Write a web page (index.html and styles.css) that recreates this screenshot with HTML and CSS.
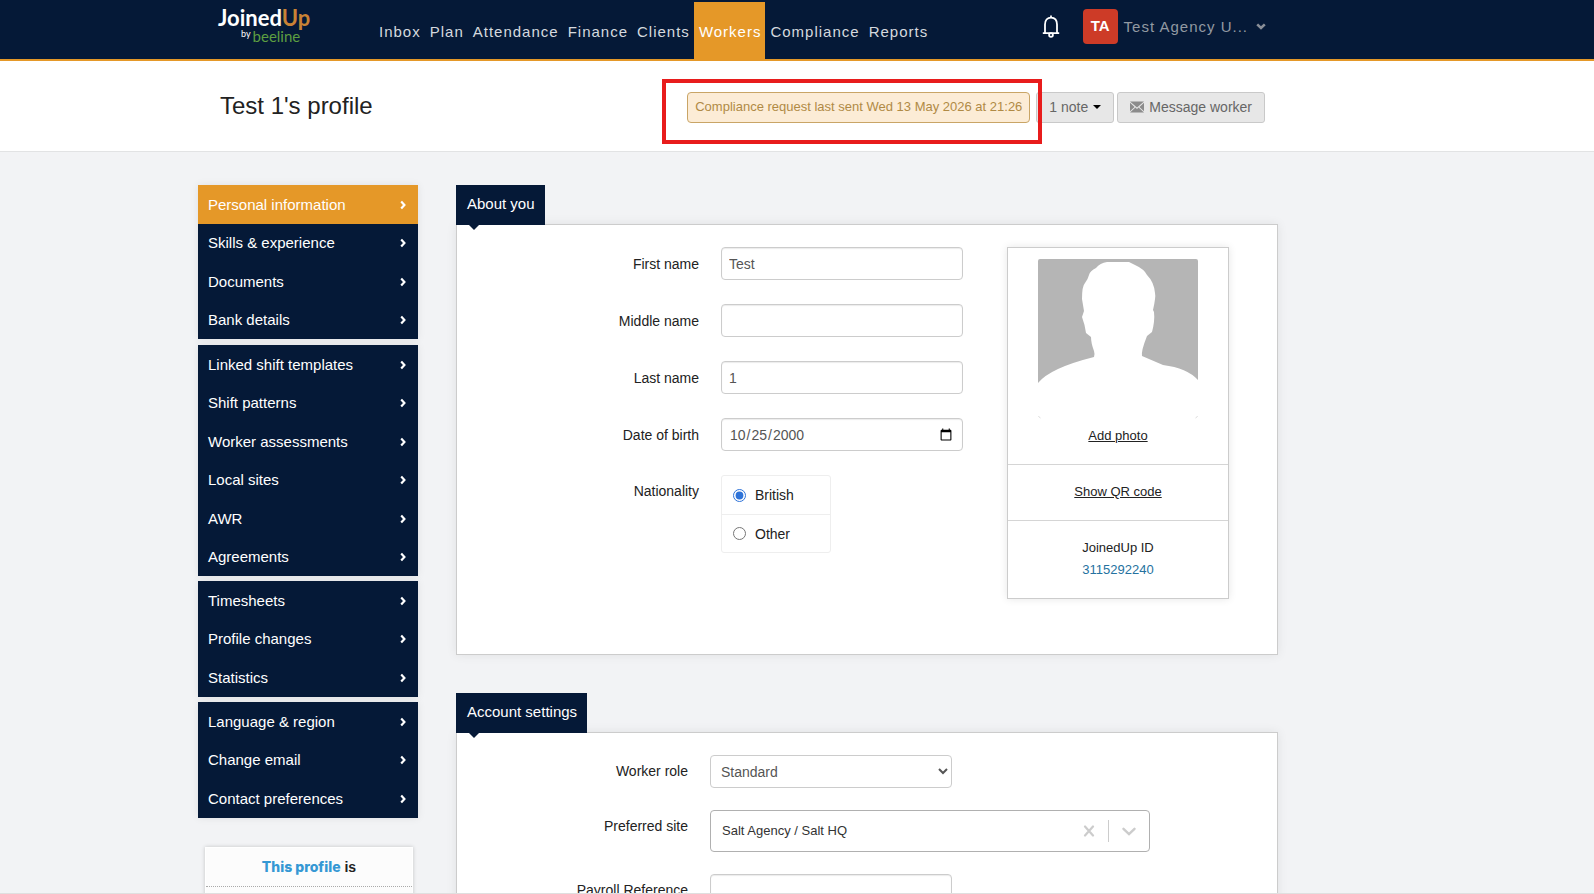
FILE: index.html
```html
<!DOCTYPE html>
<html lang="en">
<head>
<meta charset="utf-8">
<title>Test 1's profile</title>
<link rel="stylesheet" href="styles.css">
</head>
<body>
<svg class="sprite" aria-hidden="true">
  <symbol id="arrow" viewBox="0 0 8 10"><path d="M2.2 1.600 5.4 5 2.2 8.4" fill="none" stroke="currentColor" stroke-width="2.2"/></symbol>
  <symbol id="chevron" viewBox="0 0 14 9"><path d="M1.5 1.8 7 7 12.5 1.8" fill="none" stroke="currentColor" stroke-width="2.4" stroke-linecap="round"/></symbol>
</svg>
<header class="topbar">
  <div class="wrap topbar-inner">
    <a class="logo" href="#">
      <span class="logo-main">Joined<span class="logo-up">Up</span></span>
      <span class="logo-sub"><span class="logo-by">by</span><span class="logo-bee">beeline</span></span>
    </a>
    <nav class="nav">
      <a href="#">Inbox</a><a href="#">Plan</a><a href="#">Attendance</a><a href="#">Finance</a><a href="#">Clients</a><a class="active" href="#">Workers</a><a href="#">Compliance</a><a href="#">Reports</a>
    </nav>
    <div class="account">
      <button class="bell" type="button" aria-label="Notifications">
        <svg width="18" height="23" viewBox="0 0 18 23" fill="none" stroke="#fff" stroke-width="1.8"><path d="M3 18V9.500C3 5 5.500 2.600 9 2.600S15 5 15 9.500V18M.8 18.200H17.200M9 .5V2.600"/><circle cx="9" cy="20" r="1.900"/></svg>
      </button>
      <button class="user" type="button">
        <span class="avatar">TA</span>
        <span class="user-name">Test Agency U...</span>
        <svg class="user-arrow" width="10" height="7" viewBox="0 0 10 7"><path d="M1.200 1.400 5 5 8.800 1.400" fill="none" stroke="currentColor" stroke-width="2.600"/></svg>
      </button>
    </div>
  </div>
</header>
<section class="titlebar">
  <div class="wrap titlebar-inner">
    <h1>Test 1's profile</h1>
    <div class="actions">
      <span class="status">Compliance request last sent Wed 13 May 2026 at 21:26<span class="highlight"></span></span>
      <button class="btn note" type="button">1 note<svg width="8" height="4" viewBox="0 0 8 4"><path d="M0 0H8L4 4Z" fill="#000"/></svg></button>
      <button class="btn message" type="button"><svg width="14" height="12" viewBox="0 0 14 12"><path d="M0 .5H14L7 6.500ZM0 1.800 4.600 5.900 0 10.200ZM14 1.800 9.400 5.900 14 10.200ZM0 11.500 5.400 6.600 7 8 8.600 6.600 14 11.500Z" fill="#8c8c8c"/></svg>Message worker</button>
    </div>
  </div>
</section>
<div class="wrap page">
  <aside class="sidebar">
    <ul class="menu">
      <li class="active"><a href="#">Personal information<svg width="8" height="10"><use href="#arrow"/></svg></a></li>
      <li><a href="#">Skills &amp; experience<svg width="8" height="10"><use href="#arrow"/></svg></a></li>
      <li><a href="#">Documents<svg width="8" height="10"><use href="#arrow"/></svg></a></li>
      <li><a href="#">Bank details<svg width="8" height="10"><use href="#arrow"/></svg></a></li>
    </ul>
    <ul class="menu">
      <li><a href="#">Linked shift templates<svg width="8" height="10"><use href="#arrow"/></svg></a></li>
      <li><a href="#">Shift patterns<svg width="8" height="10"><use href="#arrow"/></svg></a></li>
      <li><a href="#">Worker assessments<svg width="8" height="10"><use href="#arrow"/></svg></a></li>
      <li><a href="#">Local sites<svg width="8" height="10"><use href="#arrow"/></svg></a></li>
      <li><a href="#">AWR<svg width="8" height="10"><use href="#arrow"/></svg></a></li>
      <li><a href="#">Agreements<svg width="8" height="10"><use href="#arrow"/></svg></a></li>
    </ul>
    <ul class="menu">
      <li><a href="#">Timesheets<svg width="8" height="10"><use href="#arrow"/></svg></a></li>
      <li><a href="#">Profile changes<svg width="8" height="10"><use href="#arrow"/></svg></a></li>
      <li><a href="#">Statistics<svg width="8" height="10"><use href="#arrow"/></svg></a></li>
    </ul>
    <ul class="menu">
      <li><a href="#">Language &amp; region<svg width="8" height="10"><use href="#arrow"/></svg></a></li>
      <li><a href="#">Change email<svg width="8" height="10"><use href="#arrow"/></svg></a></li>
      <li><a href="#">Contact preferences<svg width="8" height="10"><use href="#arrow"/></svg></a></li>
    </ul>
    <div class="summary"><p><strong>This profile</strong> is</p></div>
  </aside>
  <main class="content">
    <section>
      <h2 class="tab">About you</h2>
      <div class="panel about">
        <div class="fields">
          <label for="first">First name</label><input id="first" type="text" value="Test">
          <label for="middle">Middle name</label><input id="middle" type="text">
          <label for="last">Last name</label><input id="last" type="text" value="1">
          <label for="dob">Date of birth</label><input id="dob" type="date" value="2000-10-25">
          <span class="group-label" id="nat">Nationality</span>
          <div class="radios" role="radiogroup" aria-labelledby="nat">
            <label><input type="radio" name="nat" checked>British</label>
            <label><input type="radio" name="nat">Other</label>
          </div>
        </div>
        <div class="card">
          <div class="card-photo">
            <svg width="160" height="160" viewBox="0 0 160 160" role="img" aria-label="Profile photo"><path fill="#b5b5b5" d="M2 0H158Q160 0 160 2V121Q149 109 125 106L104 97Q103 92 109 77L114 73Q117 62 116 53L115 51Q118 38 117 34Q116 23 109 16Q106 10 97 6L91 3H69Q62 4 58 9Q52 12 51 16Q50 20 47 24Q44 27 44 40L46 52L44 58Q47 66 48 74L53 78Q53 84 56 92Q57 95 56 98Q12 109 0 124V2Q0 0 2 0Z"/><path d="M.5 157Q1 158.500 2.500 159M159.500 157Q159 158.500 157.500 159" fill="none" stroke="#ddd"/></svg>
            <a href="#">Add photo</a>
          </div>
          <div class="card-row"><a href="#">Show QR code</a></div>
          <div class="card-row card-id">JoinedUp ID<br><span>3115292240</span></div>
        </div>
      </div>
    </section>
    <section>
      <h2 class="tab">Account settings</h2>
      <div class="panel settings">
        <label for="role">Worker role</label>
        <select id="role"><option>Standard</option></select>
        <label for="site">Preferred site</label>
        <div class="combo">
          <input id="site" type="text" role="combobox" aria-expanded="false" value="Salt Agency / Salt HQ">
          <button type="button" aria-label="Clear"><svg width="12" height="12" viewBox="0 0 12 12"><path d="M2 1.500 10 10.500M10 1.500 2 10.500" stroke="currentColor" stroke-width="2.200" stroke-linecap="round"/></svg></button>
          <span class="combo-line"></span>
          <button type="button" aria-label="Open"><svg width="14" height="9"><use href="#chevron"/></svg></button>
        </div>
        <label for="payroll">Payroll Reference</label>
        <input id="payroll" type="text">
      </div>
    </section>
  </main>
</div>
</body>
</html>
```
FILE: styles.css
```css
* { box-sizing: border-box; }
body {
  margin: 0;
  height: 100vh;
  overflow: hidden;
  border-bottom: 1px solid #dfdfdf;
  background: #f2f3f5;
  color: #222;
  font: 14px/20px "Liberation Sans", Arial, sans-serif;
}
a { color: inherit; }
button, input, select { font: inherit; color: inherit; }
h1, h2, p, ul { margin: 0; padding: 0; font-weight: normal; }
.sprite { position: absolute; width: 0; height: 0; }
.wrap { max-width: 1278px; padding-left: 198px; }

.topbar { background: #051937; border-bottom: 2px solid #e59828; }
.topbar-inner { display: flex; align-items: flex-start; height: 59px; padding-right: 12px; }
.logo { width: 156px; margin: 6px 0 0 20px; color: #fff; text-decoration: none; font-family: Lato, sans-serif; }
.logo-main { display: block; font-size: 22px; line-height: 24px; font-weight: 700; }
.logo-up { color: #c98235; }
.logo-sub { display: flex; gap: 2px; padding-left: 23px; line-height: 12px; }
.logo-by { font-size: 9px; line-height: 8px; }
.logo-bee { font-size: 15px; color: #5d9e41; }
.nav { display: flex; align-self: stretch; margin-top: 2px; }
.nav a {
  display: flex;
  align-items: center;
  padding: 3px 4px 0 5px;
  color: #d5d9df;
  font-size: 15px;
  letter-spacing: 1px;
  text-decoration: none;
}
.nav a.active { background: #e59828; color: #fff; }
.account { display: flex; align-items: center; gap: 23px; margin: 9px 0 0 auto; }
.account button { display: flex; align-items: center; padding: 0; border: 0; background: none; }
.avatar { width: 35px; height: 35px; border-radius: 4px; background: #cd3b27; color: #fff; font-weight: bold; font-size: 15px; line-height: 34px; text-align: center; }
.user-name { margin: 0 8px 0 6px; color: #9299a2; font-size: 15px; letter-spacing: 1px; }
.user-arrow { color: #8a8f98; }

.titlebar { background: #fff; border-bottom: 1px solid #e2e3e4; }
.titlebar-inner { display: flex; align-items: center; justify-content: space-between; height: 90px; padding-right: 13px; }
h1 { margin-left: 22px; font-size: 24px; line-height: 32px; }
.actions { display: flex; gap: 3px; padding-top: 3px; }
.status {
  position: relative;
  margin-right: 3px;
  padding: 0 7px;
  border: 1px solid #c9a566;
  border-radius: 4px;
  background: #fcecd6;
  color: #b08a45;
  font-size: 13px;
  line-height: 28px;
}
.highlight { position: absolute; z-index: 1; inset: -14px -13px -22px -26px; border: 4px solid #e81c1c; }
.btn { display: flex; align-items: center; height: 31px; padding: 0 12px 1px; border: 1px solid #c9c9c9; border-radius: 3px; background: #e7e7e7; color: #666; }
.note svg { margin-left: 5px; }
.message svg { margin-right: 5px; }

.page { display: grid; grid-template-columns: 220px 1fr; column-gap: 38px; padding-top: 33px; }
.sidebar { display: flex; flex-direction: column; gap: 5px; }
.menu { list-style: none; background: #051937; box-shadow: 0 0 8px rgba(0, 0, 0, .08); }
.menu:first-child { margin-bottom: 1px; }
.menu li { line-height: 38px; }
.menu li:nth-child(odd) { line-height: 39px; }
.menu a { display: flex; align-items: center; justify-content: space-between; padding: 0 11px 0 10px; color: #fff; font-size: 15px; text-decoration: none; }
.menu .active { background: #e59828; }
.summary { min-height: 80px; margin: 24px 5px 0 7px; background: #fcfcfc; border: 1px solid #fff; box-shadow: 0 0 4px rgba(0, 0, 0, .2); text-align: center; }
.summary p { padding: 9px 0; border-bottom: 1px dotted #aaa; font-weight: bold; }
.summary strong { color: #3598d4; font-family: Inter, sans-serif; font-weight: 800; }

.tab { position: relative; z-index: 1; width: fit-content; margin-bottom: -1px; padding: 0 10px 2px 11px; background: #051937; color: #fff; font-size: 15px; line-height: 38px; }
.tab::after { content: ""; position: absolute; top: 100%; left: 13px; border: 5px solid transparent; border-top-color: #051937; border-bottom: 0; }
.panel { border: 1px solid #ccc; background: #fff; box-shadow: 0 0 10px rgba(0, 0, 0, .08); }
.content section { margin-bottom: 38px; }
.about { display: flex; justify-content: space-between; align-items: flex-start; padding: 22px 48px 55px 0; }
.fields { display: grid; grid-template-columns: 242px 242px; gap: 24px 22px; align-items: center; }
.fields > label, .settings > label { text-align: right; }
.content input[type="text"], .content input[type="date"], select {
  width: 242px;
  height: 33px;
  padding: 0 7px;
  border: 1px solid #ccc;
  border-radius: 4px;
  background: #fff;
  box-shadow: inset 0 1px 1px rgba(0, 0, 0, .08);
  color: #555;
}
.group-label { align-self: start; padding-top: 6px; text-align: right; }
.radios { width: 110px; border: 1px solid #eee; border-radius: 3px; }
.radios label { display: flex; align-items: center; gap: 9px; height: 38px; padding-left: 11px; }
.radios label + label { border-top: 1px solid #eee; }
.radios input { width: 13px; height: 13px; margin: 0; accent-color: #2e73d8; }
.card { width: 222px; border: 1px solid #ccc; box-shadow: 0 0 8px rgba(0, 0, 0, .1); font-size: 13px; line-height: 22px; text-align: center; }
.card-photo { padding: 11px 0 17px; }
.card-photo svg { display: block; margin: 0 auto 6px; }
.card-row { padding: 16px 0 17px; border-top: 1px solid #d5d5d5; }
.card-id span { color: #2572a0; }
.settings { display: grid; grid-template-columns: 231px 440px; column-gap: 22px; row-gap: 22px; padding: 22px 0; }
.settings > label { padding-top: 6px; }
.settings select { padding: 0 6px; box-shadow: none; }
.combo { display: flex; align-items: center; height: 42px; border: 1px solid #b0b0b0; border-radius: 4px; }
.content .combo input { flex: 1; height: 38px; padding: 0 11px 1px; border: 0; box-shadow: none; color: #333; font-size: 13px; }
.combo button { display: flex; padding: 0 13px; border: 0; background: none; color: #ccc; }
.combo-line { width: 1px; height: 22px; background: #ccc; }
```
